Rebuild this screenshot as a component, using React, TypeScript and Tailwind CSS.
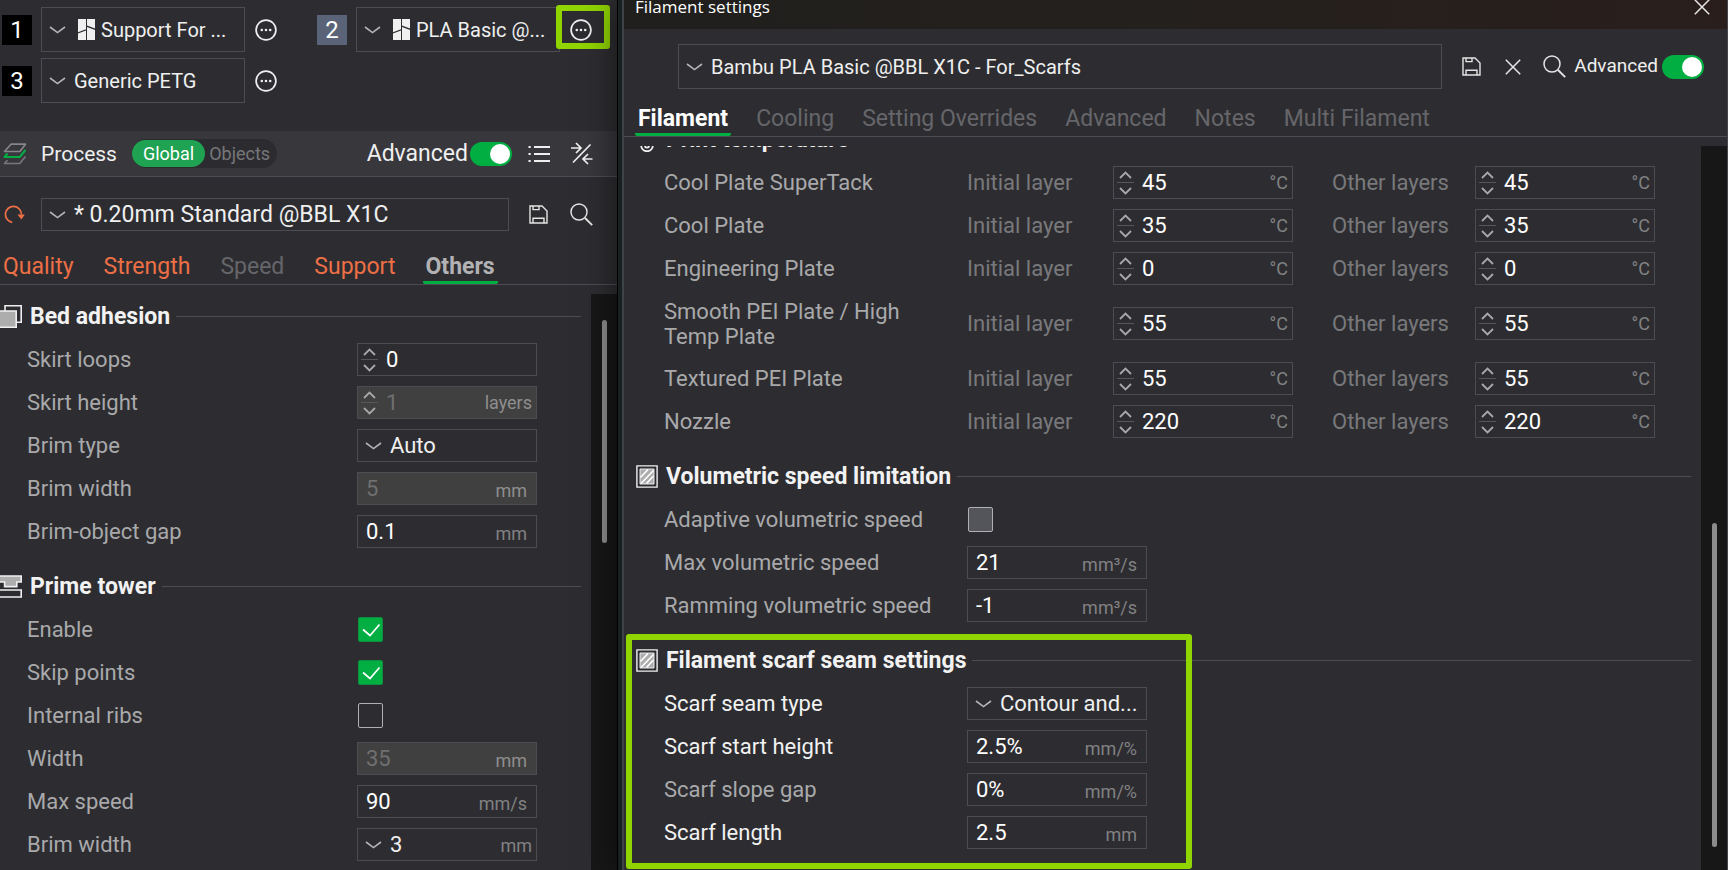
import React, { useId } from "react";

type IconProps = { className?: string };

const ChevronDown = ({ className = "" }: IconProps) => (
  <svg viewBox="0 0 17 8" className={`h-2 w-[17px] shrink-0 ${className}`} fill="none" stroke="#b4b4b6" strokeWidth="1.6">
    <path d="M1 1l7.5 5.6L16 1" />
  </svg>
);

const BrandMark = () => (
  <svg viewBox="0 0 17 21" className="h-[21px] w-[17px] shrink-0" fill="#f0f0f0">
    <path d="M0 0h8v10.2L0 13.2z" />
    <path d="M0 14.4l8-3V21H0z" />
    <path d="M9 0h8v9.6L9 6.6z" />
    <path d="M9 7.9l8 3V21H9z" />
  </svg>
);

const MoreIcon = () => (
  <svg viewBox="0 0 22 22" className="size-[22px]" fill="none">
    <circle cx="11" cy="11" r="9.9" stroke="#efefef" strokeWidth="1.7" />
    <g fill="#efefef">
      <circle cx="6.8" cy="11" r="1.3" />
      <circle cx="11" cy="11" r="1.3" />
      <circle cx="15.2" cy="11" r="1.3" />
    </g>
  </svg>
);

const LayersIcon = () => (
  <svg viewBox="0 0 24 22" className="h-[22px] w-6 shrink-0" fill="none" strokeWidth="1.7" strokeLinejoin="round">
    <path d="M20 16.500 16.700 20.500H1.500L4.500 17.200M20 16.500l2.500-3" stroke="#77777b" />
    <path d="M4.500 10.500 1.500 14h15.200L22.500 7" stroke="#00ae42" strokeWidth="2" />
    <path d="M8 1.200h14.500l-5.600 7.300H1.500z" stroke="#85858a" />
  </svg>
);

const ListIcon = () => (
  <svg viewBox="0 0 22 18" className="h-[18px] w-[22px]" stroke="#efefef" strokeWidth="2">
    <path d="M6 2h16M6 9h16M6 16h16" />
    <path d="M.5 2h2.200M.5 9h2.200M.5 16h2.200" />
  </svg>
);

const CompareIcon = () => (
  <svg viewBox="0 0 23 23" className="size-[23px]" fill="none" stroke="#efefef" strokeWidth="1.7">
    <path d="M20.500 2.500 3 20.500M1 6h9M6 1l5 5-5 5M22.500 17h-9M18 12l-5 5 5 5" />
  </svg>
);

const SaveIcon = () => (
  <svg viewBox="0 0 19 19" className="size-[19px]" fill="none" stroke="#e4e4e4" strokeWidth="1.4">
    <path d="M1 1h12l5 5v12H1zM4 1v3.600h6V1M4 18v-4.800h11V18" />
  </svg>
);

const SearchIcon = () => (
  <svg viewBox="0 0 23 23" className="size-[23px]" fill="none" stroke="#e4e4e4" strokeWidth="1.5">
    <circle cx="9" cy="9" r="8" />
    <path d="M15 15l7.200 7.200" strokeWidth="1.9" />
  </svg>
);

const CrossIcon = ({ className = "" }: IconProps) => (
  <svg viewBox="0 0 16 16" className={`size-4 ${className}`} stroke="#e8e8e8" strokeWidth="1.5">
    <path d="M.8.8l14.400 14.400M15.200.8.8 15.200" />
  </svg>
);

const ResetIcon = () => (
  <svg viewBox="0 0 22 19" className="h-[19px] w-[22px]" fill="none">
    <path d="M8.200 17.300A8 8 0 1 1 17.400 9.600" stroke="#ed6f46" strokeWidth="1.7" />
    <path d="M13.400 9.400h7.400l-3.400 5z" fill="#ed6f46" />
  </svg>
);

const AdhesionIcon = () => (
  <svg viewBox="0 0 22 23" className="h-[23px] w-[22px] shrink-0">
    <path d="M5 .8h16.200v16.400H5z" fill="#2d2d31" stroke="#efefef" strokeWidth="1.6" />
    <path d="M-1 6h17.200v16.200H-1z" fill="#adadad" stroke="#efefef" strokeWidth="1.6" />
  </svg>
);

const TowerIcon = () => (
  <svg viewBox="0 0 22 23" className="h-[23px] w-[22px] shrink-0" strokeWidth="1.6">
    <path d="M-1 1h22.200v6h-4.400v4.600H4.600V7H-1z" fill="#adadad" stroke="#efefef" />
    <path d="M-1 15h22.200v7H-1z" fill="#2d2d31" stroke="#efefef" />
  </svg>
);

const HatchIcon = () => (
  <svg viewBox="0 0 22 23" className="h-[23px] w-[22px] shrink-0">
    <path d="M.9.9h20.200v21.200H.9z" fill="none" stroke="#efefef" strokeWidth="1.4" />
    <path d="M4 4h14v15H4z" fill="#adadad" stroke="#efefef" strokeWidth="1" />
    <path d="M4.500 12.500 12 4.500M5 18.500l12.500-13M10.500 18.500l7-7.500" stroke="#fff" strokeWidth="1.6" />
  </svg>
);

const NozzleIcon = () => (
  <svg viewBox="0 0 22 24" className="h-6 w-[22px] shrink-0" fill="none" stroke="#efefef" strokeWidth="1.8">
    <path d="M8 12.500V3a3 3 0 0 1 6 0v9.500a5.800 5.800 0 1 1-6 0z" />
    <circle cx="11" cy="17.6" r="2" />
  </svg>
);

function Select({ label, value, unit, brand, className = "" }: { label?: string; value: string; unit?: string; brand?: boolean; className?: string }) {
  return (
    <div className={`flex min-w-0 items-center border border-[#4c4c52] pl-[7px] ${className}`}>
      <ChevronDown />
      {brand && <span className="ml-3"><BrandMark /></span>}
      <select
        aria-label={label}
        className={`min-w-0 flex-1 appearance-none truncate bg-transparent text-[#efefef] outline-none ${brand ? "pl-1.5" : "pl-2"}`}
      >
        <option>{value}</option>
      </select>
      {unit && <span className="mt-0.5 pr-1 text-lg leading-none text-[#818183]">{unit}</span>}
    </div>
  );
}

function Field({ id, label, value, unit, spin, disabled, className = "" }: { id?: string; label?: string; value: string; unit?: string; spin?: boolean; disabled?: boolean; className?: string }) {
  return (
    <div className={`flex h-[33px] w-[180px] min-w-0 items-center border border-[#4c4c52] ${disabled ? "bg-[#404040]" : ""} ${className}`}>
      {spin && (
        <div className="ml-[3px] flex w-[17px] shrink-0 flex-col items-center">
          <button aria-label="Increase" className="flex h-[15px] w-full items-center justify-center">
            <svg viewBox="0 0 13 8" className="h-2 w-[13px]" fill="none" stroke="#a8a8aa" strokeWidth="1.8"><path d="M1 7l5.500-5.500L12 7" /></svg>
          </button>
          <span className="h-px w-full bg-[#56565c]" />
          <button aria-label="Decrease" className="flex h-[15px] w-full items-center justify-center">
            <svg viewBox="0 0 13 8" className="h-2 w-[13px]" fill="none" stroke="#a8a8aa" strokeWidth="1.8"><path d="M1 1l5.500 5.500L12 1" /></svg>
          </button>
        </div>
      )}
      <input
        id={id}
        aria-label={label}
        defaultValue={value}
        disabled={disabled}
        className="w-0 min-w-0 flex-1 bg-transparent pl-2 text-white outline-none disabled:text-[#6f6f70]"
      />
      {unit && (
        <span className={`text-lg leading-none ${disabled ? "text-[#8e8e8e]" : "text-[#818183]"} ${spin ? "pr-1" : "mt-1 pr-[9px]"}`}>{unit}</span>
      )}
    </div>
  );
}

function Check({ id, checked, filled }: { id: string; checked?: boolean; filled?: boolean }) {
  return (
    <span className="ml-px grid size-[25px]">
      <input
        id={id}
        type="checkbox"
        defaultChecked={checked}
        className={`peer col-start-1 row-start-1 size-[25px] appearance-none rounded-xs border border-[#b0b0b2] checked:border-[#0d8f3d] checked:bg-[#00ae42] ${filled ? "bg-[#54555a]" : ""}`}
      />
      <svg viewBox="0 0 25 25" className="pointer-events-none invisible col-start-1 row-start-1 peer-checked:visible" fill="none" stroke="#fff" strokeWidth="1.7">
        <path d="M5 12.500l7 6L21.500 7.500" />
      </svg>
    </span>
  );
}

function Toggle({ id }: { id: string }) {
  return (
    <input
      id={id}
      type="checkbox"
      role="switch"
      defaultChecked
      className="flex h-6 w-[42px] shrink-0 appearance-none items-center justify-end rounded-full bg-[#00ae42] px-0.5 before:size-5 before:rounded-full before:bg-white"
    />
  );
}

type Tab = { name: string; tone: "active" | "soft" | "orange" | "dim" };
const tones = {
  active: "border-[#00ae42] font-bold text-white",
  soft: "border-[#00ae42] font-bold text-[#b2b2b5]",
  orange: "border-transparent text-[#ed6f46]",
  dim: "border-transparent text-[#66666a]",
};

function Tabs({ tabs, className }: { tabs: Tab[]; className: string }) {
  return (
    <div role="tablist" className={`flex border-b border-[#4c4c55] text-[23px] ${className}`}>
      {tabs.map((t) => (
        <button key={t.name} role="tab" className={`h-[33px] rounded-b-xs border-b-3 px-[3px] pt-0.5 whitespace-nowrap ${tones[t.tone]}`}>
          {t.name}
        </button>
      ))}
    </div>
  );
}

function SectionTitle({ icon, children }: { icon: React.ReactNode; children: string }) {
  return (
    <h2 className="flex h-[43px] items-center pr-2.5 text-[23px] font-bold text-[#f2f2f2]">
      {icon}
      <span className="mr-1.5 ml-2 whitespace-nowrap">{children}</span>
      <span className="h-px flex-1 bg-[#4c4c52]" />
    </h2>
  );
}

type RowData = {
  label: string;
  kind: "spin" | "text" | "select" | "check";
  value?: string;
  unit?: string;
  disabled?: boolean;
  checked?: boolean;
  filled?: boolean;
  bright?: boolean;
};

function Row({ row, labelClass }: { row: RowData; labelClass: string }) {
  const id = useId();
  return (
    <div className="flex h-[43px] items-center">
      <label htmlFor={id} className={`shrink-0 ${labelClass} ${row.bright ? "text-[#f2f2f2]" : "text-[#a9a9ab]"}`}>{row.label}</label>
      {row.kind === "select" && <Select label={row.label} value={row.value!} unit={row.unit} className="h-[33px] w-[180px]" />}
      {row.kind === "check" && <Check id={id} checked={row.checked} filled={row.filled} />}
      {(row.kind === "spin" || row.kind === "text") && (
        <Field id={id} value={row.value!} unit={row.unit} disabled={row.disabled} spin={row.kind === "spin"} />
      )}
    </div>
  );
}

const adhesion: RowData[] = [
  { label: "Skirt loops", kind: "spin", value: "0" },
  { label: "Skirt height", kind: "spin", value: "1", unit: "layers", disabled: true },
  { label: "Brim type", kind: "select", value: "Auto" },
  { label: "Brim width", kind: "text", value: "5", unit: "mm", disabled: true },
  { label: "Brim-object gap", kind: "text", value: "0.1", unit: "mm" },
];
const tower: RowData[] = [
  { label: "Enable", kind: "check", checked: true },
  { label: "Skip points", kind: "check", checked: true },
  { label: "Internal ribs", kind: "check" },
  { label: "Width", kind: "text", value: "35", unit: "mm", disabled: true },
  { label: "Max speed", kind: "text", value: "90", unit: "mm/s" },
  { label: "Brim width", kind: "select", value: "3", unit: "mm" },
];
const temperatures = [
  { label: "Cool Plate SuperTack", value: "45" },
  { label: "Cool Plate", value: "35" },
  { label: "Engineering Plate", value: "0" },
  { label: "Smooth PEI Plate / High Temp Plate", value: "55", tall: true },
  { label: "Textured PEI Plate", value: "55" },
  { label: "Nozzle", value: "220" },
];
const volumetric: RowData[] = [
  { label: "Adaptive volumetric speed", kind: "check", filled: true },
  { label: "Max volumetric speed", kind: "text", value: "21", unit: "mm³/s" },
  { label: "Ramming volumetric speed", kind: "text", value: "-1", unit: "mm³/s" },
];
const scarf: RowData[] = [
  { label: "Scarf seam type", kind: "select", value: "Contour and...", bright: true },
  { label: "Scarf start height", kind: "text", value: "2.5%", unit: "mm/%", bright: true },
  { label: "Scarf slope gap", kind: "text", value: "0%", unit: "mm/%" },
  { label: "Scarf length", kind: "text", value: "2.5", unit: "mm", bright: true },
];

function FilamentSlot({ n, name, brand, selected }: { n: number; name: string; brand?: boolean; selected?: boolean }) {
  return (
    <div className="flex items-center">
      <button className={`size-[30px] shrink-0 text-2xl leading-none text-white ${selected ? "bg-[#5a6378]" : "bg-black"}`}>{n}</button>
      <Select label={`Filament ${n}`} value={name} brand={brand} className="ml-[9px] h-[45px] w-[204px] text-xl" />
      <div className="relative ml-2.5 flex">
        <button aria-label={`Filament ${n} options`}><MoreIcon /></button>
        {selected && <span className="pointer-events-none absolute -top-3.5 -left-3.5 h-11 w-[54px] rounded-[3px] border-6 border-[#90d400]" />}
      </div>
    </div>
  );
}

function ProcessPanel() {
  return (
    <aside className="flex min-h-0 min-w-0 flex-col overflow-hidden">
      <div className="grid h-[131px] shrink-0 grid-cols-[275px_275px] content-start gap-x-10 gap-y-1.5 pt-[7px] pl-0.5">
        <FilamentSlot n={1} name="Support For ..." brand />
        <FilamentSlot n={2} name="PLA Basic @..." brand selected />
        <FilamentSlot n={3} name="Generic PETG" />
      </div>

      <header className="flex h-[46px] shrink-0 items-center border-b border-[#4c4c55] bg-[#37373c] pr-6 pl-[3px]">
        <LayersIcon />
        <h1 className="ml-3.5 text-[21px]">Process</h1>
        <div className="ml-[15px] flex h-[29px] items-center rounded-full bg-[#2c2c30] pr-[7px] text-lg">
          <button className="mr-1 h-[27px] rounded-full bg-[#1fa352] px-[11px] text-white">Global</button>
          <button className="text-[#77777a]">Objects</button>
        </div>
        <label htmlFor="process-advanced" className="ml-auto text-[23px]">Advanced</label>
        <span className="ml-0.5 flex"><Toggle id="process-advanced" /></span>
        <button aria-label="Parameter list" className="ml-4"><ListIcon /></button>
        <button aria-label="Compare presets" className="ml-5"><CompareIcon /></button>
      </header>

      <div className="mt-[21px] flex shrink-0 items-center pr-6 pl-1">
        <button aria-label="Reset"><ResetIcon /></button>
        <Select label="Process preset" value="* 0.20mm Standard @BBL X1C" className="ml-[15px] h-[33px] flex-1 text-[23px]" />
        <button aria-label="Save preset" className="ml-5"><SaveIcon /></button>
        <button aria-label="Search" className="ml-[22px]"><SearchIcon /></button>
      </div>

      <Tabs
        className="mt-5 shrink-0 gap-6"
        tabs={[
          { name: "Quality", tone: "orange" },
          { name: "Strength", tone: "orange" },
          { name: "Speed", tone: "dim" },
          { name: "Support", tone: "orange" },
          { name: "Others", tone: "soft" },
        ]}
      />

      <div className="mt-[9px] flex min-h-0 flex-1">
        <div className="min-w-0 flex-1 overflow-hidden pt-px">
          <section>
            <SectionTitle icon={<AdhesionIcon />}>Bed adhesion</SectionTitle>
            {adhesion.map((r) => <Row key={r.label} row={r} labelClass="w-[357px] pl-[27px]" />)}
          </section>
          <section className="mt-3">
            <SectionTitle icon={<TowerIcon />}>Prime tower</SectionTitle>
            {tower.map((r) => <Row key={r.label} row={r} labelClass="w-[357px] pl-[27px]" />)}
          </section>
        </div>
        <div className="w-[26px] bg-[#171717] pt-[26px] pl-[11px]">
          <div className="h-[223px] w-[5px] rounded-full bg-[#8c8c8c]" />
        </div>
      </div>
    </aside>
  );
}

function FilamentDialog() {
  return (
    <div role="dialog" aria-label="Filament settings" className="relative flex min-h-0 min-w-0 border-l border-black shadow-[0_0_32px_rgba(0,0,0,0.55)]">
      <div className="w-1 bg-[#1a2022]" />
      <div className="flex min-w-0 flex-1 flex-col overflow-hidden border-r border-l-2 border-r-[#46464c] border-l-[#3e4347] bg-[#2d2d31]">
        <header className="flex h-[29px] shrink-0 items-start justify-between bg-linear-to-r from-[#201f1d] via-[#24201d] to-[#291e1c] pr-[17px] pl-[11px]">
          <h1 className="font-['Open_Sans'] text-[17px] leading-[14px] text-white">Filament settings</h1>
          <button aria-label="Close" className="-mt-px"><CrossIcon /></button>
        </header>

        <div className="mt-[15px] flex shrink-0 items-center pr-[23px] pl-[54px] text-xl">
          <Select label="Filament preset" value="Bambu PLA Basic @BBL X1C - For_Scarfs" className="h-[45px] flex-1" />
          <button aria-label="Save preset" className="ml-5"><SaveIcon /></button>
          <button aria-label="Delete preset" className="ml-6"><CrossIcon /></button>
          <button aria-label="Search" className="ml-[22px]"><SearchIcon /></button>
          <label htmlFor="filament-advanced" className="ml-2 text-[19px]">Advanced</label>
          <span className="ml-1 flex"><Toggle id="filament-advanced" /></span>
        </div>

        <Tabs
          className="mt-3.5 shrink-0 gap-[22px] pl-[11px]"
          tabs={[
            { name: "Filament", tone: "active" },
            { name: "Cooling", tone: "dim" },
            { name: "Setting Overrides", tone: "dim" },
            { name: "Advanced", tone: "dim" },
            { name: "Notes", tone: "dim" },
            { name: "Multi Filament", tone: "dim" },
          ]}
        />

        <div className="mt-[9px] flex min-h-0 flex-1">
          <div className="min-w-0 flex-1 overflow-hidden pl-3">
            <section className="-mt-7">
              <h2 className="flex h-[43px] items-center gap-2 text-[23px] font-bold text-[#f2f2f2]">
                <NozzleIcon />
                Print temperature
              </h2>
              {temperatures.map((t) => (
                <div key={t.label} className={`flex items-center text-[#79797c] ${t.tall ? "h-[67px]" : "h-[43px]"}`}>
                  <div className="w-[331px] shrink-0 pr-12 pl-7 leading-[25px] text-[#a9a9ab]">{t.label}</div>
                  <div className="w-[146px] shrink-0">Initial layer</div>
                  <Field label={`${t.label} initial layer`} value={t.value} unit="°C" spin />
                  <div className="ml-[39px] w-[143px] shrink-0">Other layers</div>
                  <Field label={`${t.label} other layers`} value={t.value} unit="°C" spin />
                </div>
              ))}
            </section>
            <section className="mt-3">
              <SectionTitle icon={<HatchIcon />}>Volumetric speed limitation</SectionTitle>
              {volumetric.map((r) => <Row key={r.label} row={r} labelClass="w-[331px] pl-7" />)}
            </section>
            <section className="relative mt-3">
              <SectionTitle icon={<HatchIcon />}>Filament scarf seam settings</SectionTitle>
              {scarf.map((r) => <Row key={r.label} row={r} labelClass="w-[331px] pl-7" />)}
              <div className="pointer-events-none absolute -top-[5px] -left-2.5 h-[235px] w-[566px] rounded-[3px] border-6 border-[#90d400]" />
            </section>
          </div>
          <div className="flex w-[26px] flex-col bg-[#171717] pb-[23px] pl-[11px]">
            <div className="mt-auto h-[324px] w-[5px] rounded-full bg-[#8c8c8c]" />
          </div>
        </div>
      </div>
    </div>
  );
}

export default function App() {
  return (
    <main className="grid h-screen grid-cols-[617fr_1111fr] grid-rows-1 overflow-hidden bg-[#2d2d31] font-[Roboto,sans-serif] text-[22px] leading-[26px] text-[#efefef]">
      <ProcessPanel />
      <FilamentDialog />
    </main>
  );
}
